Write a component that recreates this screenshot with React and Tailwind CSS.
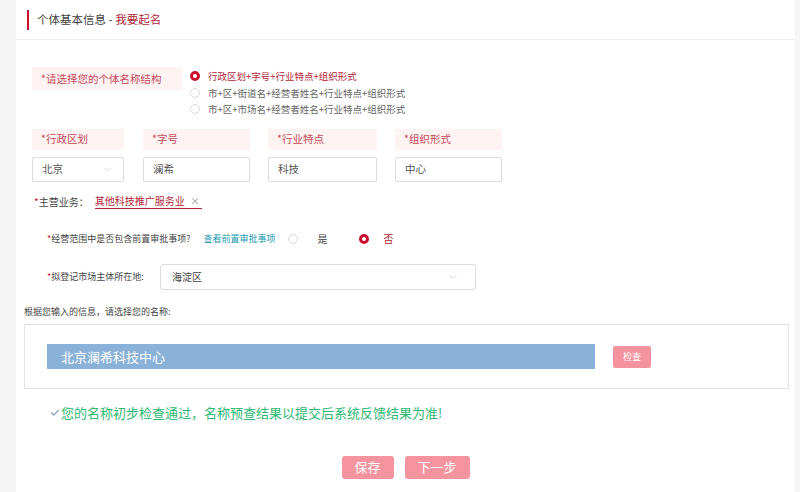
import React from "react";
import { ChevronDown, Check } from "lucide-react";

const font = { fontFamily: '"Noto Sans CJK SC", "Noto Sans", sans-serif' };

const structures = [
  { text: "行政区划+字号+行业特点+组织形式", on: true },
  { text: "市+区+街道名+经营者姓名+行业特点+组织形式", on: false },
  { text: "市+区+市场名+经营者姓名+行业特点+组织形式", on: false },
];

const fields = [
  { label: "*行政区划", value: "北京", w: "w-[92px]", select: true },
  { label: "*字号", value: "澜希", w: "w-[107px]" },
  { label: "*行业特点", value: "科技", w: "w-[109px]" },
  { label: "*组织形式", value: "中心", w: "w-[107px]" },
];

const Radio = ({ on }) =>
  on ? (
    <span className="inline-block h-[10px] w-[10px] shrink-0 rounded-full border-[3px] border-[#c8102e] bg-white" />
  ) : (
    <span className="inline-block h-[10px] w-[10px] shrink-0 rounded-full border border-[#d9d9d9] bg-white" />
  );

export default function App() {
  return (
    <div className="min-h-[492px] w-[800px] bg-[#f5f5f5]" style={font}>
      <div className="ml-[16px] min-h-[492px] w-[779px] bg-white">
        {/* header */}
        <div className="flex h-[40px] items-center border-b border-[#eeeeee] pl-[11px]">
          <span className="h-[20px] w-[2px] bg-[#c8102e]" />
          <span className="ml-[8px] text-[11.5px] text-[#444]">
            个体基本信息 - <span className="text-[#b3263a]">我要起名</span>
          </span>
        </div>

        <div className="px-[16px]">
          {/* name structure */}
          <div className="mt-[27px] flex">
            <div className="flex h-[23px] w-[150px] items-center bg-[#fdf3f3] pl-[9px] text-[10.5px] text-[#c9485a]">
              *请选择您的个体名称结构
            </div>
            <div className="ml-[8px] mt-[1px] flex flex-col">
              {structures.map((s) => (
                <div key={s.text} className="flex h-[16.5px] items-center gap-[8px]">
                  <Radio on={s.on} />
                  <span className={`text-[9.5px] ${s.on ? "text-[#b3263a]" : "text-[#666]"}`}>{s.text}</span>
                </div>
              ))}
            </div>
          </div>

          {/* fields */}
          <div className="mt-[11px] flex gap-[18px]">
            {fields.map((f, i) => (
              <div key={f.label} className={`${f.w} ${i === 0 ? "mr-[1px]" : ""} flex flex-col`}>
                <div className="flex h-[21px] items-center bg-[#fdf3f3] pl-[9px] text-[10.5px] text-[#c9485a]">
                  {f.label}
                </div>
                <div className="mt-[7px] flex h-[25px] items-center justify-between rounded-[2px] border border-[#dcdcdc] pl-[9px] pr-[10px] text-[10.5px] text-[#555]">
                  <span>{f.value}</span>
                  {f.select && <ChevronDown size={11} strokeWidth={1} className="text-[#aaa]" />}
                </div>
              </div>
            ))}
          </div>

          {/* main business */}
          <div className="mt-[11px] flex h-[17px] items-center pl-[2px] text-[10px]">
            <span className="text-[#444]">
              <span className="text-[#c8102e]">*</span>主营业务：
            </span>
            <span className="ml-[6px] border-b border-[#b3263a] pr-[2px] leading-[15px] text-[#b3263a]">
              其他科技推广服务业 <span className="ml-[3px] text-[#999]">×</span>
            </span>
          </div>

          {/* pre-approval */}
          <div className="mt-[20px] flex h-[18px] items-center pl-[15px] text-[9px] text-[#444]">
            <span>
              <span className="text-[#c8102e]">*</span>经营范围中是否包含前置审批事项?
            </span>
            <span className="ml-[13px] text-[#1a9ab0]">查看前置审批事项</span>
            <span className="ml-[12px] flex">
              <Radio on={false} />
            </span>
            <span className="ml-[20px] text-[10px]">是</span>
            <span className="ml-[31px] flex">
              <Radio on={true} />
            </span>
            <span className="ml-[15px] text-[10px] text-[#b3263a]">否</span>
          </div>

          {/* location */}
          <div className="mt-[16px] flex items-center pl-[15px] text-[9px] text-[#444]">
            <span className="w-[113px]">
              <span className="text-[#c8102e]">*</span>拟登记市场主体所在地:
            </span>
            <div className="flex h-[26px] w-[316px] items-center justify-between rounded-[3px] border border-[#dcdcdc] pl-[11px] pr-[16px] text-[10px]">
              <span>海淀区</span>
              <ChevronDown size={12} strokeWidth={1} className="text-[#aaa]" />
            </div>
          </div>
        </div>

        {/* name choice */}
        <div className="mt-[15px] pl-[8px] text-[9px] text-[#444]">根据您输入的信息，请选择您的名称:</div>
        <div className="ml-[8px] mt-[6px] flex h-[65px] w-[765px] items-center border border-[#e3e3e3] pl-[22px]">
          <div className="flex h-[25px] w-[548px] items-center bg-[#8ab2d8] pl-[14px] text-[13px] font-normal text-white">
            北京澜希科技中心
          </div>
          <button className="ml-[18px] flex h-[22px] w-[38px] items-center justify-center rounded-[2px] bg-[#f4939e] text-[9px] text-white">
            检查
          </button>
        </div>

        {/* success */}
        <div className="mt-[14px] flex items-center pl-[34px] text-[13px] text-[#2eb872]">
          <Check size={10} strokeWidth={3} className="mr-[1px] text-[#8a9ab8]" />
          您的名称初步检查通过，名称预查结果以提交后系统反馈结果为准!
        </div>

        {/* actions */}
        <div className="mt-[33px] flex justify-center gap-[11px] pb-[14px]">
          <button className="h-[23px] w-[52px] rounded-[3px] bg-[#f5949e] text-[13px] text-white">保存</button>
          <button className="h-[23px] w-[65px] rounded-[3px] bg-[#f5949e] text-[13px] text-white">下一步</button>
        </div>
      </div>
    </div>
  );
}
